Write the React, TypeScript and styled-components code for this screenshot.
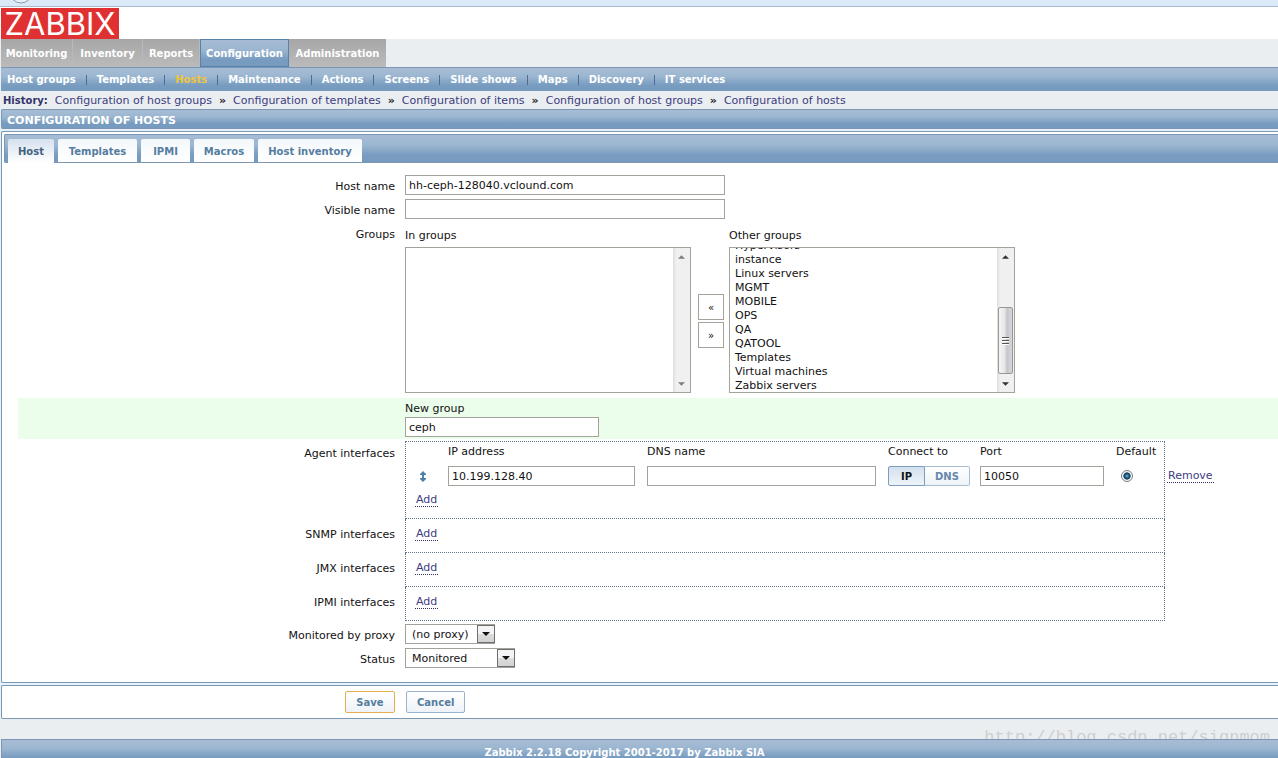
import React, { useEffect, useRef, useState } from 'react';
import styled, { createGlobalStyle, css } from 'styled-components';

const line = '#7c97b4';
const barGradient = 'linear-gradient(to bottom, #a6bcd4 0%, #9db7d1 35%, #789cc0 75%, #769bbf 100%)';
const buttonGradient = 'linear-gradient(to bottom, #ffffff, #eef3f8)';

const GlobalStyle = createGlobalStyle`
  * { box-sizing: border-box; }
  body {
    margin: 0;
    background: #eaeef1;
    color: #111;
    font: 11px/14px Verdana, "DejaVu Sans", sans-serif;
    overflow: hidden;
  }
  input, select, button { font: inherit; color: inherit; margin: 0; }
`;

const Page = styled.div`
  min-height: 100vh;
  overflow: hidden;
`;

const BrowserEdge = styled.div`
  height: 7px;
  background: #dce9f8;
  border-bottom: 1px solid #a9bbcf;
  svg { display: block; margin-left: 11px; }
`;

const Header = styled.header`
  display: flex;
  height: 32px;
  padding: 1px 0 0 1px;
  background: #fff;
`;

const Logo = styled.a`
  display: flex;
  align-items: center;
  justify-content: center;
  width: 118px;
  height: 31px;
  background: #df3131;
  color: #fff;
  font: 400 31px/31px Inter, "Liberation Sans", sans-serif;
  text-decoration: none;
`;

const MainNav = styled.nav`
  display: flex;
  height: 28px;
  padding-left: 1px;
`;

const MainNavLink = styled.a<{ $width: number; $active?: boolean }>`
  display: flex;
  align-items: center;
  justify-content: center;
  width: ${(p) => p.$width}px;
  padding-top: 2px;
  border-right: 1px solid #b9b9b9;
  background: linear-gradient(to bottom, #a6a6a6, #bbbbbb);
  color: #fff;
  font-size: 10px;
  font-weight: bold;
  text-decoration: none;
  &:last-child { border-right: 0; }
  ${(p) =>
    p.$active &&
    css`
      border: 1px solid #5583ac;
      background: ${barGradient};
    `}
`;

const SubNav = styled.nav`
  display: flex;
  align-items: center;
  height: 24px;
  margin-left: 1px;
  padding-left: 6px;
  border-top: 1px solid ${line};
  background: ${barGradient};
`;

const SubNavLink = styled.a<{ $active?: boolean }>`
  color: ${(p) => (p.$active ? '#efc63b' : '#fff')};
  font-size: 10px;
  font-weight: bold;
  text-decoration: none;
  white-space: nowrap;
`;

const Divider = styled.i`
  width: 1px;
  height: 10px;
  margin: 0 10px;
  background: #4f6c96;
`;

const History = styled.div`
  display: flex;
  align-items: center;
  height: 18px;
  padding: 2px 0 0 3px;
  white-space: nowrap;
  a { color: #3d3d80; text-decoration: none; }
  b { margin: 0 7px; color: #222; }
  strong { margin-right: 7px; color: #33336b; font-size: 10px; }
`;

const TitleBar = styled.h1`
  height: 20px;
  margin: 0 0 2px 1px;
  padding-left: 5px;
  border: 1px solid ${line};
  border-right: 0;
  border-radius: 2px 0 0 2px;
  background: ${barGradient};
  color: #fff;
  font-size: 11px;
  line-height: 21px;
`;

const Backdrop = styled.form`
  background: #e6f2fb;
`;

const Panel = styled.section`
  margin-left: 1px;
  padding: 2px 0 14px 2px;
  border: 1px solid ${line};
  border-right: 0;
  border-radius: 2px 0 0 2px;
  background: #fff;
`;

const TabBar = styled.div`
  display: flex;
  align-items: flex-end;
  gap: 4px;
  height: 29px;
  padding-left: 3px;
  border: 1px solid ${line};
  border-right: 0;
  border-radius: 2px 0 0 2px;
  background: ${barGradient};
`;

const Tab = styled.button<{ $width: number; $active?: boolean }>`
  width: ${(p) => p.$width}px;
  height: 23px;
  padding: 2px 0 0;
  border: 0;
  border-radius: 2px 2px 0 0;
  background: ${(p) => (p.$active ? 'linear-gradient(to bottom, #d5e1ee, #ffffff)' : 'linear-gradient(to bottom, #f4f8fb, #ffffff)')};
  color: ${(p) => (p.$active ? '#45627f' : '#557d9f')};
  font-size: 10px;
  font-weight: bold;
  ${(p) => p.$active && 'height: 24px; margin-bottom: -1px;'}
`;

const Form = styled.div`
  display: flex;
  flex-direction: column;
  padding: 12px 0 0 14px;
`;

const Row = styled.div<{ $gap?: number; $highlight?: boolean }>`
  display: grid;
  grid-template-columns: 377px 1fr;
  column-gap: 10px;
  margin-bottom: ${(p) => p.$gap ?? 4}px;
  ${(p) => p.$highlight && 'background: #ebfdeb; padding-bottom: 2px;'}
`;

const ProxyRow = styled(Row)`
  margin-top: 3px;
`;

const Label = styled.label`
  padding-top: 5px;
  text-align: right;
`;

const InterfaceLabel = styled.div<{ $tall?: boolean }>`
  padding-top: ${(p) => (p.$tall ? 6 : 9)}px;
  text-align: right;
`;

const TextInput = styled.input<{ $width: number }>`
  display: block;
  width: ${(p) => p.$width}px;
  height: 20px;
  padding: 1px 3px 0;
  border: 1px solid #a3a39b;
  border-radius: 0;
  background: #fff;
  outline: 0;
`;

const Transfer = styled.div`
  display: flex;
`;

const ListColumn = styled.div`
  width: 286px;
  label { display: block; height: 24px; padding-top: 6px; }
`;

const ListFrame = styled.div`
  display: flex;
  height: 146px;
  border: 1px solid #a3a39b;
  background: #fff;
`;

const ListBox = styled.select`
  flex: 1;
  min-width: 0;
  height: 144px;
  padding: 0;
  border: 0;
  outline: 0;
  background: #fff;
  scrollbar-width: none;
  option { min-height: 14px; height: 14px; padding: 1px 5px 0; line-height: 14px; }
`;

const ScrollTrack = styled.div<{ $disabled?: boolean }>`
  display: flex;
  flex-direction: column;
  justify-content: space-between;
  align-items: center;
  width: 17px;
  padding: 7px 0 6px;
  background: linear-gradient(to right, #dedede, #f0f0f0 20%);
  color: ${(p) => (p.$disabled ? '#7d7d7d' : '#333')};
`;

const ScrollThumb = styled.div`
  display: flex;
  align-items: center;
  justify-content: center;
  width: 15px;
  height: 67px;
  margin: auto 0 8px;
  border: 1px solid #979797;
  border-radius: 2px;
  background: linear-gradient(to right, #f5f5f5, #e6e6e8 45%, #c5c5cb 60%, #d6d6da);
`;

const MoveButtons = styled.div`
  display: flex;
  flex-direction: column;
  gap: 2px;
  padding: 71px 5px 0 7px;
`;

const MoveButton = styled.button`
  width: 26px;
  height: 26px;
  padding: 1px 0 0;
  border: 1px solid #a3a39b;
  background: #fff;
  font-size: 10px;
`;

const NewGroupLabel = styled.label`
  display: block;
  height: 19px;
  padding-top: 4px;
`;

const InterfaceBox = styled.div<{ $tall?: boolean }>`
  width: 760px;
  height: ${(p) => (p.$tall ? 78 : 34)}px;
  padding: ${(p) => (p.$tall ? 0 : '8px 0 0')};
  border: 1px dotted #62748c;
  ${(p) => !p.$tall && 'border-top: 0;'}
`;

const InterfaceTable = styled.table`
  width: 830px;
  margin-bottom: 7px;
  border-collapse: collapse;
  table-layout: fixed;
  th { height: 24px; padding: 0 0 4px; font-weight: normal; text-align: left; }
  td { height: 20px; padding: 0; vertical-align: middle; }
  td:first-child { padding-left: 13px; }
  td:last-child { padding-left: 3px; }
  svg { display: block; }
`;

const DottedLink = styled.a`
  display: inline-block;
  padding: 0 1px;
  border-bottom: 1px dotted #30305f;
  color: #3d3d80;
  line-height: 13px;
  text-decoration: none;
`;

const AddLink = styled(DottedLink)`
  margin-left: 9px;
`;

const Segments = styled.div`
  display: flex;
`;

const Segment = styled.button<{ $active?: boolean }>`
  height: 20px;
  padding: 1px 0 0;
  width: ${(p) => (p.$active ? 37 : 45)}px;
  border: 1px solid ${(p) => (p.$active ? '#7e9cbd' : '#a5bcd3')};
  border-radius: ${(p) => (p.$active ? '2px 0 0 2px' : '0 2px 2px 0')};
  ${(p) => !p.$active && 'border-left: 0;'}
  background: ${(p) => (p.$active ? 'linear-gradient(to bottom, #d3e0ee, #eef4fa)' : buttonGradient)};
  color: ${(p) => (p.$active ? '#111' : '#6688a8')};
  font-size: 10px;
  font-weight: bold;
`;

const Radio = styled.input`
  appearance: none;
  display: block;
  width: 12px;
  height: 12px;
  margin: 0 0 0 5px;
  border: 1px solid #7a8086;
  border-radius: 50%;
  background: radial-gradient(circle at 50% 50%, #6fc0dc 0, #1f6388 25%, #123a55 46%, #f2f5f7 56%);
`;

const SelectFrame = styled.div<{ $width: number }>`
  position: relative;
  width: ${(p) => p.$width}px;
  height: 20px;
`;

const Select = styled.select`
  appearance: none;
  width: 100%;
  height: 20px;
  padding: 2px 18px 0 6px;
  border: 1px solid #a3a39b;
  border-radius: 0;
  background: #fff;
`;

const SelectArrow = styled.span`
  position: absolute;
  top: 1px;
  right: 0;
  display: flex;
  align-items: center;
  justify-content: center;
  width: 18px;
  height: 18px;
  border: 1px solid #6f6f6f;
  background: linear-gradient(to bottom, #f4f4f4 0 50%, #dddddd 50%, #d2d2d2);
  pointer-events: none;
`;

const Actions = styled.section`
  display: flex;
  align-items: center;
  gap: 11px;
  height: 34px;
  margin: 2px 0 0 1px;
  padding-left: 343px;
  border: 1px solid ${line};
  border-right: 0;
  border-radius: 2px 0 0 2px;
  background: #fff;
`;

const ActionButton = styled.button<{ $primary?: boolean }>`
  min-width: 50px;
  height: 22px;
  padding: 1px 10px 0;
  border: 1px solid ${(p) => (p.$primary ? '#e3ae51' : '#9bb3cb')};
  border-radius: 2px;
  background: ${buttonGradient};
  color: #557d9f;
  font-size: 10px;
  font-weight: bold;
`;

const Watermark = styled.div`
  height: 20px;
  padding: 9px 8px 0 0;
  overflow: hidden;
  color: #cdcfd0;
  font: 17px/20px "Liberation Mono", monospace;
  text-align: right;
`;

const Footer = styled.footer`
  height: 24px;
  margin-left: 1px;
  padding-right: 31px;
  border-top: 1px solid ${line};
  border-left: 1px solid ${line};
  background: ${barGradient};
  color: #fff;
  font-size: 10px;
  font-weight: bold;
  line-height: 25px;
  text-align: center;
`;

const Triangle = ({ up, width = 7 }: { up?: boolean; width?: number }) => (
  <svg width={width} height="4" viewBox="0 0 8 4" aria-hidden="true">
    <path d={up ? 'M0 4 4 0 8 4z' : 'M0 0h8L4 4z'} fill="currentColor" />
  </svg>
);

const mainItems = [
  { name: 'Monitoring', width: 72 },
  { name: 'Inventory', width: 70 },
  { name: 'Reports', width: 57 },
  { name: 'Configuration', width: 89 },
  { name: 'Administration', width: 97 },
];
const subItems = ['Host groups', 'Templates', 'Hosts', 'Maintenance', 'Actions', 'Screens', 'Slide shows', 'Maps', 'Discovery', 'IT services'];
const historyItems = ['host groups', 'templates', 'items', 'host groups', 'hosts'];
const tabs = [
  { name: 'Host', width: 46 },
  { name: 'Templates', width: 79 },
  { name: 'IPMI', width: 49 },
  { name: 'Macros', width: 60 },
  { name: 'Host inventory', width: 104 },
];
const otherGroups = ['Hypervisors', 'instance', 'Linux servers', 'MGMT', 'MOBILE', 'OPS', 'QA', 'QATOOL', 'Templates', 'Virtual machines', 'Zabbix servers'];
const columns = [42, 199, 241, 92, 136, 48, 72];

export default function App() {
  const otherRef = useRef<HTMLSelectElement>(null);
  const [tab, setTab] = useState('Host');

  useEffect(() => {
    if (otherRef.current) otherRef.current.scrollTop = otherRef.current.scrollHeight;
  }, []);

  return (
    <Page>
      <GlobalStyle />
      <BrowserEdge>
        <svg width="20" height="6" viewBox="0 0 20 6" aria-hidden="true">
          <circle cx="10" cy="-8" r="11" fill="#e8f0f8" stroke="#8d9bab" />
        </svg>
      </BrowserEdge>
      <Header>
        <Logo href="#">ZABBIX</Logo>
      </Header>
      <MainNav>
        {mainItems.map(({ name, width }) => (
          <MainNavLink key={name} href="#" $width={width} $active={name === 'Configuration'}>{name}</MainNavLink>
        ))}
      </MainNav>
      <SubNav>
        {subItems.map((item, i) => (
          <React.Fragment key={item}>
            {i > 0 && <Divider />}
            <SubNavLink href="#" $active={item === 'Hosts'}>{item}</SubNavLink>
          </React.Fragment>
        ))}
      </SubNav>
      <History>
        <strong>History:</strong>
        {historyItems.map((item, i) => (
          <React.Fragment key={i}>
            {i > 0 && <b>»</b>}
            <a href="#">Configuration of {item}</a>
          </React.Fragment>
        ))}
      </History>
      <Backdrop onSubmit={(e) => e.preventDefault()}>
        <TitleBar>CONFIGURATION OF HOSTS</TitleBar>
        <Panel>
          <TabBar role="tablist">
            {tabs.map(({ name, width }) => (
              <Tab
                key={name}
                type="button"
                role="tab"
                aria-selected={tab === name}
                $width={width}
                $active={tab === name}
                onClick={() => setTab(name)}
              >
                {name}
              </Tab>
            ))}
          </TabBar>
          <Form>
            <Row>
              <Label htmlFor="host">Host name</Label>
              <TextInput id="host" $width={320} defaultValue="hh-ceph-128040.vclound.com" />
            </Row>
            <Row>
              <Label htmlFor="visible">Visible name</Label>
              <TextInput id="visible" $width={320} />
            </Row>
            <Row $gap={5}>
              <Label as="div">Groups</Label>
              <Transfer>
                <ListColumn>
                  <label htmlFor="in-groups">In groups</label>
                  <ListFrame>
                    <ListBox id="in-groups" multiple />
                    <ScrollTrack $disabled>
                      <Triangle up />
                      <Triangle />
                    </ScrollTrack>
                  </ListFrame>
                </ListColumn>
                <MoveButtons>
                  <MoveButton type="button">«</MoveButton>
                  <MoveButton type="button">»</MoveButton>
                </MoveButtons>
                <ListColumn>
                  <label htmlFor="other-groups">Other groups</label>
                  <ListFrame>
                    <ListBox id="other-groups" multiple ref={otherRef}>
                      {otherGroups.map((group) => (
                        <option key={group}>{group}</option>
                      ))}
                    </ListBox>
                    <ScrollTrack>
                      <Triangle up />
                      <ScrollThumb>
                        <svg width="7" height="8" viewBox="0 0 7 8" aria-hidden="true">
                          <path d="M0 .5h7M0 3.5h7M0 6.5h7" stroke="#555" />
                          <path d="M0 1.5h7M0 4.5h7M0 7.5h7" stroke="#fff" />
                        </svg>
                      </ScrollThumb>
                      <Triangle />
                    </ScrollTrack>
                  </ListFrame>
                </ListColumn>
              </Transfer>
            </Row>
            <Row $gap={2} $highlight>
              <span />
              <div>
                <NewGroupLabel htmlFor="new-group">New group</NewGroupLabel>
                <TextInput id="new-group" $width={194} defaultValue="ceph" />
              </div>
            </Row>
            <Row $gap={0}>
              <InterfaceLabel $tall>Agent interfaces</InterfaceLabel>
              <InterfaceBox $tall>
                <InterfaceTable>
                  <colgroup>
                    {columns.map((width) => (
                      <col key={width} width={width} />
                    ))}
                  </colgroup>
                  <thead>
                    <tr>
                      <th />
                      <th>IP address</th>
                      <th>DNS name</th>
                      <th>Connect to</th>
                      <th>Port</th>
                      <th>Default</th>
                      <th />
                    </tr>
                  </thead>
                  <tbody>
                    <tr>
                      <td>
                        <svg width="8" height="11" viewBox="0 0 8 11" aria-hidden="true">
                          <path d="M4 0 7 3v1H5v3h2v1l-3 3-3-3V7h2V4H1V3z" fill="#4f7fa8" />
                        </svg>
                      </td>
                      <td><TextInput aria-label="IP address" $width={187} defaultValue="10.199.128.40" /></td>
                      <td><TextInput aria-label="DNS name" $width={229} /></td>
                      <td>
                        <Segments>
                          <Segment type="button" $active>IP</Segment>
                          <Segment type="button">DNS</Segment>
                        </Segments>
                      </td>
                      <td><TextInput aria-label="Port" $width={124} defaultValue="10050" /></td>
                      <td><Radio type="radio" name="default" aria-label="Default" defaultChecked /></td>
                      <td><DottedLink href="#">Remove</DottedLink></td>
                    </tr>
                  </tbody>
                </InterfaceTable>
                <AddLink href="#">Add</AddLink>
              </InterfaceBox>
            </Row>
            {['SNMP', 'JMX', 'IPMI'].map((kind) => (
              <Row key={kind} $gap={0}>
                <InterfaceLabel>{kind} interfaces</InterfaceLabel>
                <InterfaceBox>
                  <AddLink href="#">Add</AddLink>
                </InterfaceBox>
              </Row>
            ))}
            <ProxyRow>
              <Label htmlFor="proxy">Monitored by proxy</Label>
              <SelectFrame $width={90}>
                <Select id="proxy"><option>(no proxy)</option></Select>
                <SelectArrow><Triangle width={8} /></SelectArrow>
              </SelectFrame>
            </ProxyRow>
            <Row $gap={0}>
              <Label htmlFor="status">Status</Label>
              <SelectFrame $width={110}>
                <Select id="status"><option>Monitored</option></Select>
                <SelectArrow><Triangle width={8} /></SelectArrow>
              </SelectFrame>
            </Row>
          </Form>
        </Panel>
        <Actions>
          <ActionButton type="submit" $primary>Save</ActionButton>
          <ActionButton type="button">Cancel</ActionButton>
        </Actions>
      </Backdrop>
      <Watermark>http://blog.csdn.net/signmom</Watermark>
      <Footer>Zabbix 2.2.18 Copyright 2001-2017 by Zabbix SIA</Footer>
    </Page>
  );
}
